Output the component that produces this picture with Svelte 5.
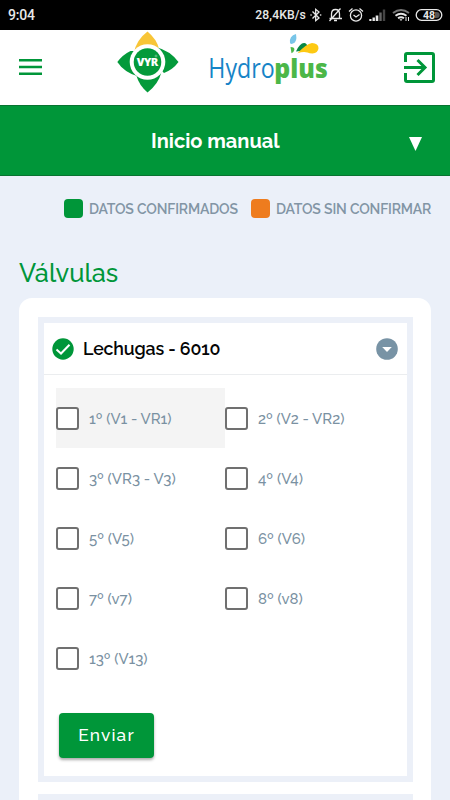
<script>
  const valves = [
    { label: '1º (V1 - VR1)', active: true },
    { label: '2º (V2 - VR2)' },
    { label: '3º (VR3 - V3)' },
    { label: '4º (V4)' },
    { label: '5º (V5)' },
    { label: '6º (V6)' },
    { label: '7º (v7)' },
    { label: '8º (v8)' },
    { label: '13º (V13)' }
  ];
</script>

<div class="screen">
  <div class="status">
    <span class="clock">9:04</span>
    <span class="speed">28,4KB/s</span>
    <svg class="status-icons" width="136" height="20" viewBox="0 0 136 20" fill="none" stroke="#e8e8e8" stroke-width="1.3">
      <path d="M5.500 6.500 12 13 8.700 15.700V4.300L12 7 5.500 13.500" />
      <path d="M4 10h.1M13.600 10h.1" stroke-width="1.600" stroke-linecap="round" />
      <path d="M22.500 13.500h12.500M24.500 13V9q0-4.500 4-4.500t4 4.500v4M33.500 3.500 22.500 16M27 15.500h3" />
      <circle cx="49" cy="10.500" r="5.600" />
      <path d="M42 6.500 45.500 3.500M56 6.500 52.500 3.500M46.500 10l2.500 2 3.500-2.500" />
      <g stroke="none">
        <rect x="62.300" y="14" width="2.200" height="2" fill="#e8e8e8" />
        <rect x="65.500" y="12.500" width="2.400" height="3.500" fill="#e8e8e8" />
        <rect x="68.700" y="10.500" width="2.600" height="5.500" fill="#e8e8e8" />
        <rect x="72.300" y="7.500" width="2.400" height="8.500" fill="#666" />
        <rect x="75.800" y="4.500" width="2.400" height="11.500" fill="#444" />
      </g>
      <path d="M86 8q8-6 16 0" stroke="#777" stroke-width="2" />
      <path d="M88.500 10.700q5.500-4 11 0M91 13.300q3-2 6 0" stroke-width="1.900" />
      <path d="M92.500 14.200 94 16 95.500 14.200z" fill="#e8e8e8" stroke="none" />
      <path d="M99 12v4M101.500 12v4" stroke-width="1" />
      <rect x="109.200" y="4.700" width="25.600" height="10.600" rx="5.300" />
      <path d="M128 7h1.700a3 3 0 0 1 0 6H128z" fill="#555" stroke="none" />
      <text x="116" y="13.900" class="battery">48</text>
    </svg>
  </div>

  <header>
    <svg class="menu" width="23" height="16" viewBox="0 0 23 16">
      <path d="M0 1.200h23M0 8h23M0 14.800h23" stroke="#009639" stroke-width="2.400" />
    </svg>
    <svg class="vyr" width="62" height="62" viewBox="0 0 62 62">
      <path d="M30.500.500Q39.500 8 42 17.500L30.500 22 16.500 23Q19 9 30.500.500z" fill="#f8c537" />
      <path d="M.300 31Q6 23.500 13.500 20L22 20 20 45Q7 41 .300 31z" fill="#049a3b" />
      <path d="M61.500 31Q53 19.500 38.500 16L36 31 47 42Q56 38.500 61.500 31z" fill="#049a3b" />
      <path d="M30.500 61.500Q22 54 19.500 45L31 36 44.500 41Q41.500 53 30.500 61.500z" fill="#049a3b" />
      <circle cx="30.500" cy="31" r="17.800" fill="#fff" />
      <circle cx="30.500" cy="31" r="13.800" fill="#049a3b" />
      <text x="19.800" y="35" textLength="21.500" class="vyr-text">VYR</text>
      <circle cx="39" cy="25" r="1" fill="none" stroke="#b4dfc1" stroke-width=".5" />
    </svg>
    <svg class="hydro" width="122" height="54" viewBox="0 0 122 54">
      <text transform="translate(.3 45) scale(.875 1)" class="hydro-light">Hydro</text>
      <text transform="translate(66.3 45) scale(.955 1)" class="hydro-bold">plus</text>
      <path d="M82 10q-1-7 6-9 1.500 8-3 9.600-2.200.800-3-.600z" fill="#78c5e8" />
      <path d="M82.500 14q4.500 0 3.800 3-.800 3-2.800 3.200z" fill="#4db848" />
      <path d="M88 18.500q4-9 8.500-8.500 3 .500 2.500 4-1 4-11 4.500z" fill="#078744" />
      <path d="M89.500 20.300Q98 11 104 10q6.500.500 6.500 5.200-.500 5-6 5.300-3 0-5-1-4-1.500-10 .800z" fill="#fdc913" />
    </svg>
    <svg class="exit" width="31" height="31" viewBox="0 0 31 31" fill="none" stroke="#009639" stroke-width="3">
      <path d="M1.500 10V3q0-1.500 1.500-1.500h25q1.500 0 1.500 1.500v25q0 1.500-1.500 1.500H3Q1.500 29.500 1.500 28v-7M0 15.500h21M13.500 8l7.500 7.500-7.500 7.500" />
    </svg>
  </header>

  <div class="title-bar">
    <span class="title">Inicio manual</span>
    <svg class="triangle" width="13" height="14" viewBox="0 0 13 14"><path d="M0 0h13L6.500 14z" fill="#fff" /></svg>
  </div>

  <main>
    <div class="legend">
      <i class="swatch"></i><span class="confirmed">DATOS CONFIRMADOS</span>
      <i class="swatch orange"></i><span class="pending">DATOS SIN CONFIRMAR</span>
    </div>
    <h1>Válvulas</h1>
    <section class="card">
      <div class="panel">
        <div class="panel-head">
          <svg width="22" height="22" viewBox="0 0 22 22">
            <circle cx="11" cy="11" r="10.700" fill="#009639" />
            <path d="M4.500 11.500 9 15.500 17.500 6.800" fill="none" stroke="#fff" stroke-width="2" />
          </svg>
          <h2>Lechugas - 6010</h2>
          <svg width="22" height="22" viewBox="0 0 22 22">
            <circle cx="11" cy="11" r="10.800" fill="#7893a5" />
            <path d="M6.200 9h9.600L11 14z" fill="#fff" />
          </svg>
        </div>
        <div class="valves">
          {#each valves as valve}
            <label class:active={valve.active}>
              <input type="checkbox" />
              <span>{valve.label}</span>
            </label>
          {/each}
        </div>
        <button>Enviar</button>
      </div>
      <div class="panel next"></div>
    </section>
  </main>
</div>

<style>
  .screen {
    width: 450px;
    height: 800px;
    overflow: hidden;
    display: flex;
    flex-direction: column;
    background: #ebf0f9;
    font-family: Raleway, Lato, sans-serif;
    font-variant-numeric: oldstyle-nums;
  }
  .screen * { box-sizing: border-box; }
  svg { display: block; flex: none; }
  .status {
    height: 30px;
    flex: none;
    display: flex;
    align-items: center;
    padding: 0 7px 0 8px;
    background: #000;
    color: #e8e8e8;
    font: 500 13px/30px Roboto, sans-serif;
  }
  .clock { font-size: 14px; letter-spacing: -0.200px; }
  .speed { margin-left: auto; margin-right: 1px; font-size: 12.200px; letter-spacing: 0.1px; }
  .battery { fill: #e8e8e8; stroke: none; font: 700 10.500px Roboto, sans-serif; }
  header {
    height: 75px;
    flex: none;
    display: flex;
    align-items: flex-start;
    background: #fff;
    padding-left: 19px;
  }
  .menu { margin-top: 29px; }
  .vyr { margin: 1px 0 0 75px; }
  .hydro { margin: 3px 0 0 29px; overflow: visible; }
  .exit { margin: 22px 0 0 74px; }
  .vyr-text { fill: #fff; font: 800 11px "Open Sans", sans-serif; }
  .hydro-light { fill: #1684c7; font: 400 26.500px "Open Sans", sans-serif; }
  .hydro-bold { fill: #4cb748; font: 800 26px "Open Sans", sans-serif; }
  .title-bar {
    height: 71px;
    flex: none;
    display: flex;
    align-items: center;
    padding: 0 28px 0 151px;
    background: #009639;
    border-top: 1px solid #087331;
    border-bottom: 1px solid #087331;
    color: #fff;
  }
  .title { font-size: 20px; font-weight: 700; line-height: 24px; white-space: nowrap; }
  .triangle { margin: 6px 0 0 auto; }
  main { padding: 22px 19px 0; }
  .legend {
    height: 20px;
    display: flex;
    align-items: center;
    padding-left: 45px;
    color: #8295a5;
    font-size: 14px;
    font-weight: 600;
    line-height: 20px;
    letter-spacing: -0.170px;
    white-space: nowrap;
  }
  .swatch { width: 19px; height: 19px; flex: none; border-radius: 4px; background: #009639; }
  .orange { background: #ee7c1e; }
  .confirmed { flex: none; width: 168px; padding: 2px 0 0 6px; }
  .pending { padding: 2px 0 0 6px; }
  h1 {
    height: 30px;
    margin: 40px 0 10px;
    color: #009639;
    font-size: 25.300px;
    font-weight: 500;
    line-height: 30px;
  }
  .card { height: 520px; padding: 19px 18.500px 0; background: #fff; border-radius: 13px; }
  .panel { height: 465px; border: 6px solid #ecf0f8; }
  .panel-head {
    height: 52px;
    display: flex;
    align-items: center;
    gap: 9px;
    padding: 0 9px 0 8.500px;
    border-bottom: 1px solid #ebedef;
  }
  h2 { flex: 1; margin: 0; color: #050505; font-size: 17.800px; font-weight: 600; line-height: 22px; letter-spacing: -0.150px; white-space: nowrap; }
  .valves { display: grid; grid-template-columns: 169px 169px; grid-auto-rows: 60px; padding: 13px 0 0 12.500px; }
  label { display: flex; align-items: center; gap: 10px; color: #7a91a2; font-size: 15px; font-weight: 500; }
  label span { padding-top: 2px; }
  .active { background: #f4f4f4; }
  input { appearance: none; flex: none; width: 23px; height: 23px; margin: 0; border: 2.500px solid #707070; border-radius: 3px; background: #fff; }
  button {
    width: 95px;
    height: 45px;
    margin: 25px 0 0 15.500px;
    padding: 0;
    border: 0;
    border-radius: 4px;
    background: #009639;
    box-shadow: 0 2px 3px #0005;
    color: #fff;
    font: 500 17.300px/45px Raleway, Lato, sans-serif;
    letter-spacing: 1.200px;
  }
  .next { margin-top: 12px; }
</style>
